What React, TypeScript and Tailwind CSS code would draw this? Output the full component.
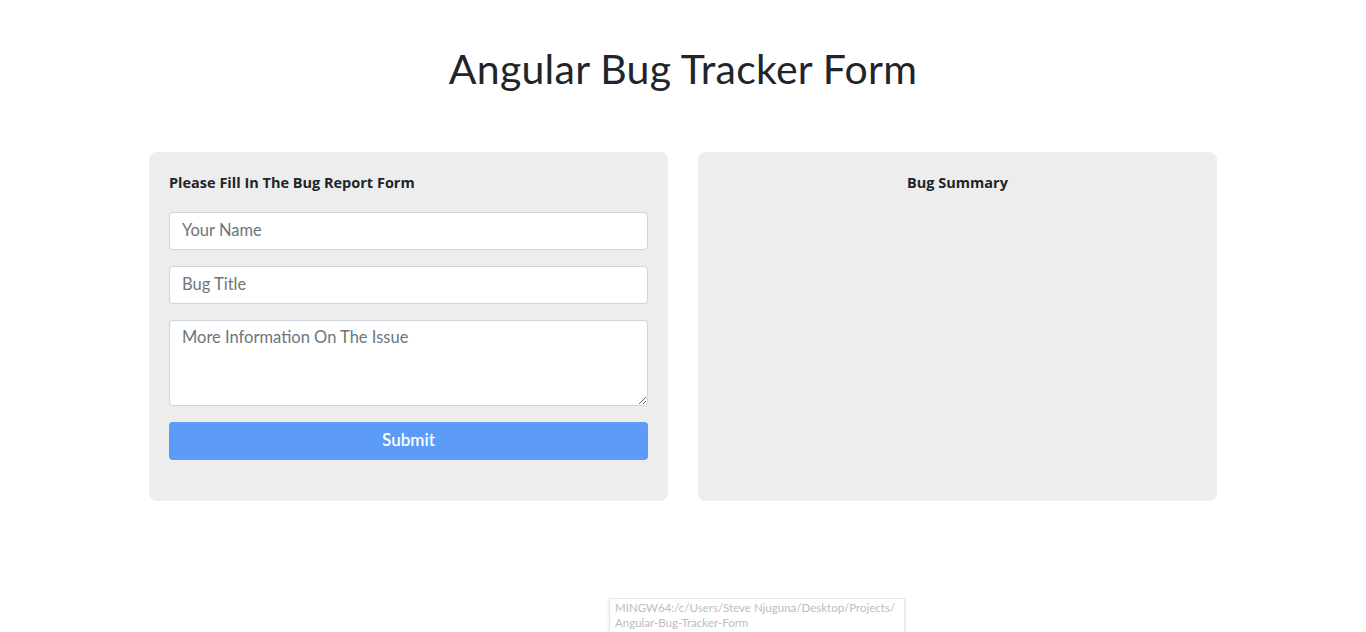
import React from "react";

export default function App() {
  const font = { fontFamily: '"Open Sans", "Noto Sans", sans-serif' };
  const lato = { fontFamily: 'Lato, "Noto Sans", sans-serif' };
  return (
    <div className="relative w-full h-[632px] bg-white text-[#212529] overflow-hidden" style={font}>
      <h1 className="text-center text-[41px] leading-[48px] pt-[45px] tracking-[0.25px] text-[#212529]" style={lato}>
        Angular Bug Tracker Form
      </h1>
      <div className="flex justify-center gap-[30px] mt-[59px]">
        <div className="w-[519px] h-[349px] bg-[#ededed] rounded-lg px-5 pt-[22px]">
          <h2 className="text-[14.5px] font-bold leading-[18px] text-[#212529]">Please Fill In The Bug Report Form</h2>
          <div className="flex flex-col gap-4 mt-[20px]" style={lato}>
            <input className="h-[38px] w-full bg-white border border-[#ced4da] rounded px-3 pb-[3px] text-[16.5px] placeholder:text-[#6c757d] outline-none" placeholder="Your Name" />
            <input className="h-[38px] w-full bg-white border border-[#ced4da] rounded px-3 pb-[3px] text-[16.5px] placeholder:text-[#6c757d] outline-none" placeholder="Bug Title" />
            <textarea className="h-[86px] w-full bg-white border border-[#ced4da] rounded px-3 pt-[4px] text-[16.5px] leading-6 placeholder:text-[#6c757d] outline-none" placeholder="More Information On The Issue" />
            <button className="h-[38px] w-full bg-[#5c9bf8] rounded text-white text-[17px] font-semibold pb-[3px]">Submit</button>
          </div>
        </div>
        <div className="w-[519px] h-[349px] bg-[#ededed] rounded-lg pt-[22px]">
          <h2 className="text-center text-[14.5px] font-bold leading-[18px] text-[#212529]">Bug Summary</h2>
        </div>
      </div>
      <div className="absolute left-[609px] top-[598px] w-[296px] h-[40px] bg-white border border-[#e6e6e6] shadow-sm px-[5px] pt-[1px] text-[11.5px] leading-[15px] text-[#bdbdbd] whitespace-nowrap" style={lato}>
        <div>MINGW64:/c/Users/Steve Njuguna/Desktop/Projects/</div>
        <div>Angular-Bug-Tracker-Form</div>
      </div>
    </div>
  );
}
